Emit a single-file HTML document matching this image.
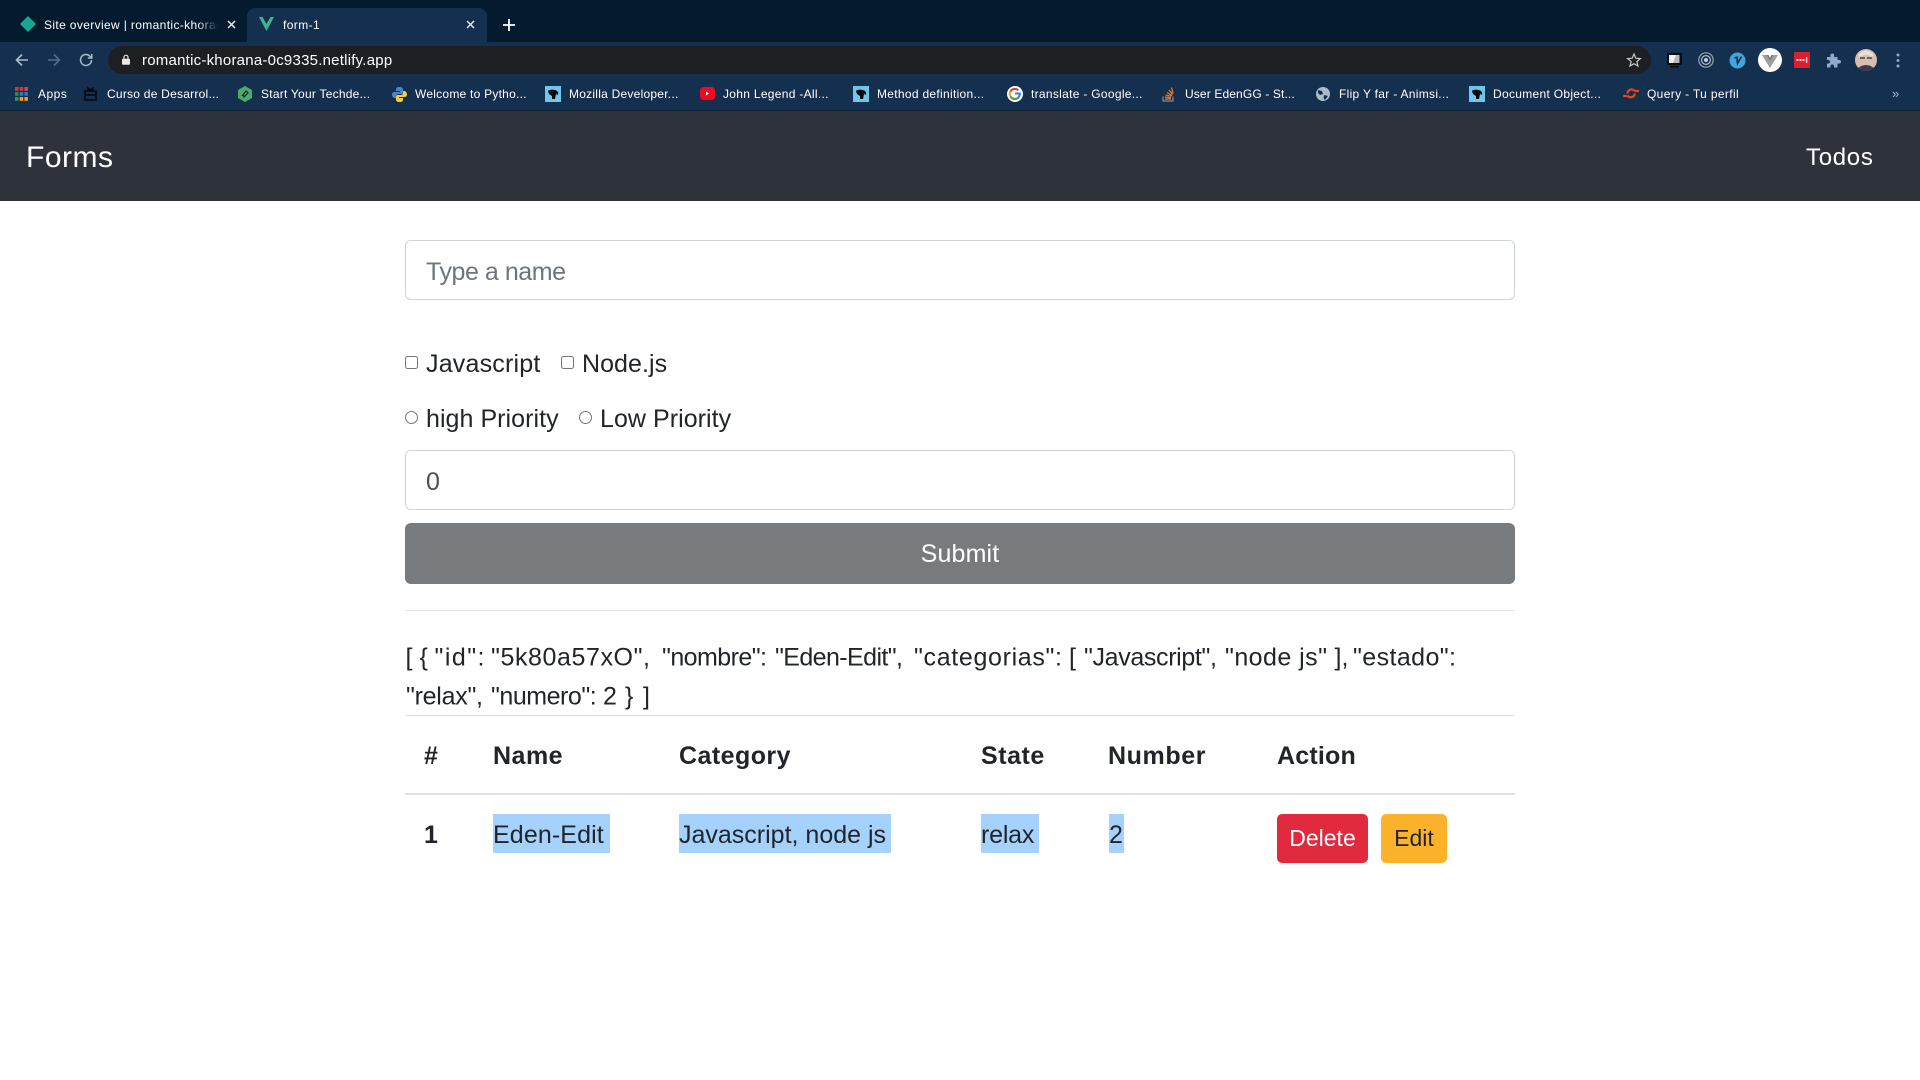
<!DOCTYPE html>
<html><head><meta charset="utf-8"><title>form-1</title>
<style>
*{box-sizing:border-box}
html,body{margin:0;padding:0;width:1920px;height:1080px;overflow:hidden;background:#fff;font-family:"Liberation Sans",sans-serif;color:#212529}
.a{position:absolute;white-space:nowrap;line-height:1}
#strip{position:absolute;left:0;top:0;width:1920px;height:42px;background:#041b2f}
#tool{position:absolute;left:0;top:42px;width:1920px;height:68px;background:#14304e}
#line{position:absolute;left:0;top:110px;width:1920px;height:1px;background:#0c2238}
#tab{position:absolute;left:247px;top:8px;width:240px;height:34px;background:#14304e;border-radius:8px 8px 0 0}
#url{position:absolute;left:108px;top:46px;width:1543px;height:28px;background:#1d1f22;border-radius:14px}
#nav{position:absolute;left:0;top:111px;width:1920px;height:90px;background:#2e333b}
.tt{font-size:12px;color:#fff}
.bm{font-size:12px;color:#fff;top:88px;letter-spacing:.24px}
svg{position:absolute;overflow:visible}
input.f{position:absolute;left:405px;width:1110px;height:60px;border:1.5px solid #ced4da;border-radius:6px;background:#fff;font:25px "Liberation Sans",sans-serif;color:#495057;padding:5px 20px 0;margin:0;outline:0}
input.f::placeholder{color:#6c757d;opacity:1;letter-spacing:-.45px}
input.c{position:absolute;margin:0;width:13px;height:13px}
.l{font-size:25px;color:#212529}
.h{font-size:25px;font-weight:bold;color:#212529;top:744px}
.s{position:absolute;top:814px;height:39px;background:#a5d2fd}
.d{font-size:25px;color:#212529;top:823px}
.b{position:absolute;top:814px;height:49px;border-radius:5px;text-align:center;font-size:23px;line-height:49px}
.j{font:25px "Liberation Sans",sans-serif;fill:#212529}
</style></head><body>
<div id="strip"></div><div id="tool"></div><div id="line"></div><div id="tab"></div><div id="url"></div>

<svg style="left:20px;top:16px" width="16" height="16" viewBox="0 0 16 16"><path d="M8 0L16 8L8 16L0 8Z" fill="#15a78f"/></svg>
<div class="a tt" style="left:44px;top:19px;width:174px;overflow:hidden;letter-spacing:.36px;-webkit-mask-image:linear-gradient(90deg,#000 88%,transparent);mask-image:linear-gradient(90deg,#000 88%,transparent)">Site overview | romantic-khorana</div>
<svg style="left:227px;top:20px" width="9" height="9" viewBox="0 0 9 9"><path d="M1 1L8 8M8 1L1 8" stroke="#e6eaee" stroke-width="1.5"/></svg>
<svg style="left:259px;top:17px" width="15" height="14" viewBox="0 0 15 14"><path d="M0 0H3.500L7.500 7L11.500 0H15L7.500 14Z" fill="#3db68c"/></svg>
<div class="a tt" style="left:283px;top:19px;letter-spacing:.4px">form-1</div>
<svg style="left:466px;top:20px" width="9" height="9" viewBox="0 0 9 9"><path d="M1 1L8 8M8 1L1 8" stroke="#e6eaee" stroke-width="1.5"/></svg>
<svg style="left:503px;top:19px" width="12" height="12" viewBox="0 0 12 12"><path d="M6 0V12M0 6H12" stroke="#fff" stroke-width="1.8"/></svg>

<svg style="left:15px;top:53px" width="14" height="14" viewBox="0 0 14 14"><path d="M13 7H2M7 1.500L1.500 7L7 12.500" fill="none" stroke="#a9bccd" stroke-width="1.600"/></svg>
<svg style="left:47px;top:53px" width="14" height="14" viewBox="0 0 14 14"><path d="M1 7H12M7 1.500L12.500 7L7 12.500" fill="none" stroke="#536d88" stroke-width="1.600"/></svg>
<svg style="left:79px;top:53px" width="14" height="14" viewBox="0 0 14 14"><path d="M12.500 7A5.500 5.500 0 1 1 10.800 3L12.500 4.800M12.800 1V5H8.800" fill="none" stroke="#a9bccd" stroke-width="1.500"/></svg>
<svg style="left:122px;top:54px" width="8" height="11" viewBox="0 0 8 11"><path d="M2 5V3.200A2 2 0 0 1 6 3.200V5" fill="none" stroke="#e8e8e8" stroke-width="1.200"/><rect x="0" y="4.800" width="8" height="6" rx="1" fill="#e8e8e8"/></svg>
<div class="a" style="left:142px;top:53px;font-size:15px;color:#fff;letter-spacing:.23px">romantic-khorana-0c9335.netlify.app</div>
<svg style="left:1627px;top:53px" width="14" height="14" viewBox="0 0 14 14"><path d="M7 1L8.800 5.200L13.400 5.600L9.900 8.600L11 13L7 10.700L3 13L4.100 8.600L.6 5.600L5.200 5.200Z" fill="none" stroke="#c8c8c8" stroke-width="1.200"/></svg>

<svg style="left:1667px;top:53px" width="15" height="15" viewBox="0 0 15 15"><rect x="0" y="0" width="15" height="12" fill="#0a0c10"/><path d="M2 2H12.500V10H2Z" fill="#b8b8b8"/><path d="M2 2H9L6 10H2Z" fill="#f2f2f2"/><rect x="3" y="13" width="9" height="1.500" fill="#0a0c10"/></svg>
<svg style="left:1698px;top:52px" width="16" height="16" viewBox="0 0 16 16"><circle cx="8" cy="8" r="7.200" fill="none" stroke="#9aa5b0" stroke-width="1.200"/><circle cx="8" cy="8" r="4.400" fill="none" stroke="#b5bdc5" stroke-width="1.200"/><circle cx="8" cy="8" r="2" fill="#c4cbd2"/></svg>
<svg style="left:1729px;top:52px" width="17" height="17" viewBox="0 0 17 17"><circle cx="8.500" cy="8.500" r="8" fill="#3fa6dc"/><path d="M5.500 6L8 5.200L8.500 11.500L12.500 4.500" fill="none" stroke="#0f2a44" stroke-width="1.600"/></svg>
<svg style="left:1758px;top:48px" width="24" height="24" viewBox="0 0 24 24"><circle cx="12" cy="12" r="12" fill="#fff"/><path d="M4 7H8.500L12 13L15.500 7H20L12 20Z" fill="#9e9e9e"/><path d="M8.500 7H10.500L12 10L13.500 7H15.500L12 13Z" fill="#707070"/></svg>
<svg style="left:1794px;top:52px" width="16" height="16" viewBox="0 0 16 16"><rect width="16" height="16" rx="1" fill="#d9202e"/><circle cx="3.500" cy="8" r="1.100" fill="#fff"/><circle cx="6.500" cy="8" r="1.100" fill="#fff"/><circle cx="9.500" cy="8" r="1.100" fill="#fff"/><rect x="12.200" y="5" width="1" height="6" fill="#fff"/></svg>
<svg style="left:1826px;top:53px" width="15" height="15" viewBox="0 0 15 15"><path d="M1 4H4.500C4 1.500 5 .5 6.300 .5S8.500 1.500 8 4H11.500V7C14 6.500 15 7.500 15 8.800S14 11 11.500 10.500V14.500H8C8.500 12.500 7.500 11.500 6.300 11.500S4 12.500 4.500 14.500H1V10.500C3 11 4 10 4 8.800S3 6.600 1 7Z" fill="#8eabc9"/></svg>
<svg style="left:1855px;top:49px" width="22" height="22" viewBox="0 0 22 22"><circle cx="11" cy="11" r="11" fill="#d8bdb0"/><path d="M3 6Q11 -3 19 6L17 8Q11 4 5 8Z" fill="#e2e0d8"/><path d="M3 19Q11 13 19 19Q11 25 3 19Z" fill="#3e3a52"/><path d="M5 9H10M12 9H17" stroke="#444" stroke-width="1.400"/></svg>
<svg style="left:1896px;top:53px" width="4" height="15" viewBox="0 0 4 15"><circle cx="2" cy="2" r="1.500" fill="#8eabc9"/><circle cx="2" cy="7.500" r="1.500" fill="#8eabc9"/><circle cx="2" cy="13" r="1.500" fill="#8eabc9"/></svg>

<svg style="left:15px;top:87px" width="13" height="14" viewBox="0 0 13 14"><g><rect x="0" y="0" width="3.500" height="3.800" fill="#d93a30"/><rect x="4.700" y="0" width="3.500" height="3.800" fill="#d93a30"/><rect x="9.400" y="0" width="3.500" height="3.800" fill="#e84336"/><rect x="0" y="5" width="3.500" height="3.800" fill="#2b8f4a"/><rect x="4.700" y="5" width="3.500" height="3.800" fill="#3076dc"/><rect x="9.400" y="5" width="3.500" height="3.800" fill="#3076dc"/><rect x="0" y="10" width="3.500" height="3.800" fill="#2b9f4a"/><rect x="4.700" y="10" width="3.500" height="3.800" fill="#f4a316"/><rect x="9.400" y="10" width="3.500" height="3.800" fill="#f4a316"/></g></svg>
<div class="a bm" style="left:38px;letter-spacing:.5px">Apps</div>
<svg style="left:84px;top:87px" width="13" height="14" viewBox="0 0 13 14"><path d="M1 4H12V13H1ZM1 8H12M4 4V1L6.500 3L9 1V4" fill="none" stroke="#05090e" stroke-width="1.500"/></svg>
<div class="a bm" style="left:107px">Curso de Desarrol...</div>
<svg style="left:238px;top:86px" width="14" height="16" viewBox="0 0 14 16"><path d="M7 0L14 4V12L7 16L0 12V4Z" fill="#4dac62"/><path d="M4 10L8 5L10 7L6 11L5 8" fill="none" stroke="#14304e" stroke-width="1.300"/></svg>
<div class="a bm" style="left:261px">Start Your Techde...</div>
<svg style="left:392px;top:87px" width="15" height="15" viewBox="0 0 15 15"><path d="M7.500 0C4.500 0 4 1 4 2.500V4H8V5H2.500C1 5 0 6 0 7.500S1 11 2.500 11H4V9C4 7.800 5 7 6 7H9.500C10.500 7 11 6.300 11 5.500V2.500C11 1 10 0 7.500 0Z" fill="#4a86bd"/><path d="M7.500 15C10.500 15 11 14 11 12.500V11H7V10H12.500C14 10 15 9 15 7.500S14 4 12.500 4H11V6C11 7.200 10 8 9 8H5.500C4.500 8 4 8.700 4 9.500V12.500C4 14 5 15 7.500 15Z" fill="#f7cb45"/></svg>
<div class="a bm" style="left:415px">Welcome to Pytho...</div>
<svg style="left:545px;top:86px" width="16" height="16" viewBox="0 0 16 16"><rect width="16" height="16" fill="#70c7ec"/><path d="M3 5Q5 3 10 4Q14 5 13 9L11 8L10 13H7L7 10L4 8Z" fill="#05090e"/></svg>
<div class="a bm" style="left:569px">Mozilla Developer...</div>
<svg style="left:700px;top:87px" width="15" height="13" viewBox="0 0 15 13"><rect width="15" height="13" rx="3.500" fill="#f4081f"/><path d="M6 4.500L9 6.500L6 8.500Z" fill="#fff"/></svg>
<div class="a bm" style="left:723px;letter-spacing:.3px">John Legend -All...</div>
<svg style="left:853px;top:86px" width="16" height="16" viewBox="0 0 16 16"><rect width="16" height="16" fill="#70c7ec"/><path d="M3 5Q5 3 10 4Q14 5 13 9L11 8L10 13H7L7 10L4 8Z" fill="#05090e"/></svg>
<div class="a bm" style="left:877px;letter-spacing:.3px">Method definition...</div>
<svg style="left:1007px;top:86px" width="16" height="16" viewBox="0 0 16 16"><circle cx="8" cy="8" r="8" fill="#fff"/><path d="M8 7.500H12.800A5 5 0 1 1 11.200 4.200" fill="none" stroke="#3b7de8" stroke-width="2"/><path d="M3.500 5.500A5 5 0 0 1 11.200 4.200" fill="none" stroke="#e44235" stroke-width="2"/><path d="M3.500 5.500A5 5 0 0 0 3.500 10.500" fill="none" stroke="#f4b400" stroke-width="2"/><path d="M3.500 10.500A5 5 0 0 0 11.500 11.500" fill="none" stroke="#34a853" stroke-width="2"/></svg>
<div class="a bm" style="left:1031px;letter-spacing:.3px">translate - Google...</div>
<svg style="left:1162px;top:86px" width="13" height="16" viewBox="0 0 13 16"><path d="M1 10.500V15H11V10.500" fill="none" stroke="#8b8d8f" stroke-width="1.200"/><path d="M3 13H9M3 11L9 11.800M3.500 9L9.400 10.200M5 6.500L10 9.500M7 4L10.500 8.500M9.500 1.500L11 7.500" fill="none" stroke="#e8782a" stroke-width="1.300"/></svg>
<div class="a bm" style="left:1185px;letter-spacing:.13px">User EdenGG - St...</div>
<svg style="left:1316px;top:87px" width="14" height="14" viewBox="0 0 14 14"><circle cx="7" cy="7" r="7" fill="#a9bccd"/><path d="M2 3L6 4L7 7L4 8L2 6ZM8 8L12 9L9 13L7.500 11Z" fill="#14304e"/></svg>
<div class="a bm" style="left:1339px;letter-spacing:.3px">Flip Y far - Animsi...</div>
<svg style="left:1469px;top:86px" width="16" height="16" viewBox="0 0 16 16"><rect width="16" height="16" fill="#70c7ec"/><path d="M3 5Q5 3 10 4Q14 5 13 9L11 8L10 13H7L7 10L4 8Z" fill="#05090e"/></svg>
<div class="a bm" style="left:1493px;letter-spacing:.3px">Document Object...</div>
<svg style="left:1623px;top:87px" width="16" height="13" viewBox="0 0 16 13"><path d="M0 9H4M12 4H16M4.500 6.500A4 4 0 0 1 12 4.500M11.800 6.500A4 4 0 0 1 4.500 8.500" fill="none" stroke="#f0421c" stroke-width="2.200"/></svg>
<div class="a bm" style="left:1647px;letter-spacing:.35px">Query - Tu perfil</div>
<div class="a" style="left:1892px;top:87px;font-size:13px;color:#a9bccd">»</div>

<div id="nav"></div>
<div class="a" style="left:26px;top:143px;font-size:30px;color:#fff;letter-spacing:.5px">Forms</div>
<div class="a" style="left:1806px;top:146px;font-size:24px;color:#fff;letter-spacing:.7px">Todos</div>

<input class="f" style="top:240px" placeholder="Type a name">
<input class="c" type="checkbox" style="left:405px;top:356px"><div class="a l" style="left:426px;top:352px;letter-spacing:.2px">Javascript</div>
<input class="c" type="checkbox" style="left:561px;top:356px"><div class="a l" style="left:582px;top:352px;letter-spacing:.05px">Node.js</div>
<input class="c" type="radio" style="left:405px;top:411px"><div class="a l" style="left:426px;top:407px;letter-spacing:.05px">high Priority</div>
<input class="c" type="radio" style="left:579px;top:411px"><div class="a l" style="left:600px;top:407px;letter-spacing:.05px">Low Priority</div>
<input class="f" style="top:450px" value="0">
<button class="a" style="left:405px;top:523px;width:1110px;height:61px;border:0;border-radius:6px;background:#787b7e;color:#fff;font:25px 'Liberation Sans',sans-serif;padding:2px 0 0;letter-spacing:.15px">Submit</button>
<div class="a" style="left:405px;top:610px;width:1110px;height:1px;background:#e4e4e4"></div>

<svg style="left:0;top:0" width="1920" height="1080">
<text class="j" x="405.500" y="665.500">[</text>
<text class="j" x="419.500" y="665.500">{</text>
<text class="j" x="434.500" y="665.500" textLength="50" lengthAdjust="spacing">"id":</text>
<text class="j" x="491" y="665.500" textLength="159" lengthAdjust="spacing">"5k80a57xO",</text>
<text class="j" x="662" y="665.500" textLength="105" lengthAdjust="spacing">"nombre":</text>
<text class="j" x="775" y="665.500" textLength="128" lengthAdjust="spacing">"Eden-Edit",</text>
<text class="j" x="914" y="665.500" textLength="148" lengthAdjust="spacing">"categorias":</text>
<text class="j" x="1069" y="665.500">[</text>
<text class="j" x="1084" y="665.500" textLength="133" lengthAdjust="spacing">"Javascript",</text>
<text class="j" x="1225" y="665.500" textLength="102" lengthAdjust="spacing">"node js"</text>
<text class="j" x="1334.500" y="665.500" textLength="14" lengthAdjust="spacing">],</text>
<text class="j" x="1353" y="665.500" textLength="103" lengthAdjust="spacing">"estado":</text>
<text class="j" x="406" y="704.500" textLength="77" lengthAdjust="spacing">"relax",</text>
<text class="j" x="491" y="704.500" textLength="105.700" lengthAdjust="spacing">"numero":</text>
<text class="j" x="603" y="704.500">2</text>
<text class="j" x="625" y="704.500">}</text>
<text class="j" x="643" y="704.500">]</text>
</svg>

<div class="a" style="left:405px;top:715px;width:1110px;height:1px;background:#dee2e6"></div>
<div class="a h" style="left:424px;letter-spacing:1.5px">#</div>
<div class="a h" style="left:493px;letter-spacing:.5px">Name</div>
<div class="a h" style="left:679px;letter-spacing:.45px">Category</div>
<div class="a h" style="left:981px;letter-spacing:.55px">State</div>
<div class="a h" style="left:1108px;letter-spacing:.6px">Number</div>
<div class="a h" style="left:1277px;letter-spacing:.2px">Action</div>
<div class="a" style="left:405px;top:793px;width:1110px;height:2px;background:#dee2e6"></div>
<div class="s" style="left:493px;width:117px"></div>
<div class="s" style="left:679px;width:212px"></div>
<div class="s" style="left:981px;width:58px"></div>
<div class="s" style="left:1109px;width:15px"></div>
<div class="a d" style="left:424px;font-weight:bold;top:822.500px">1</div>
<div class="a d" style="left:493px;letter-spacing:.12px">Eden-Edit</div>
<div class="a d" style="left:679px">Javascript, node js</div>
<div class="a d" style="left:981px;letter-spacing:-.2px">relax</div>
<div class="a d" style="left:1109px">2</div>
<div class="b" style="left:1277px;width:91px;background:#e22a3f;color:#fff">Delete</div>
<div class="b" style="left:1381px;width:66px;background:#fdb22c;color:#212529">Edit</div>
</body></html>
